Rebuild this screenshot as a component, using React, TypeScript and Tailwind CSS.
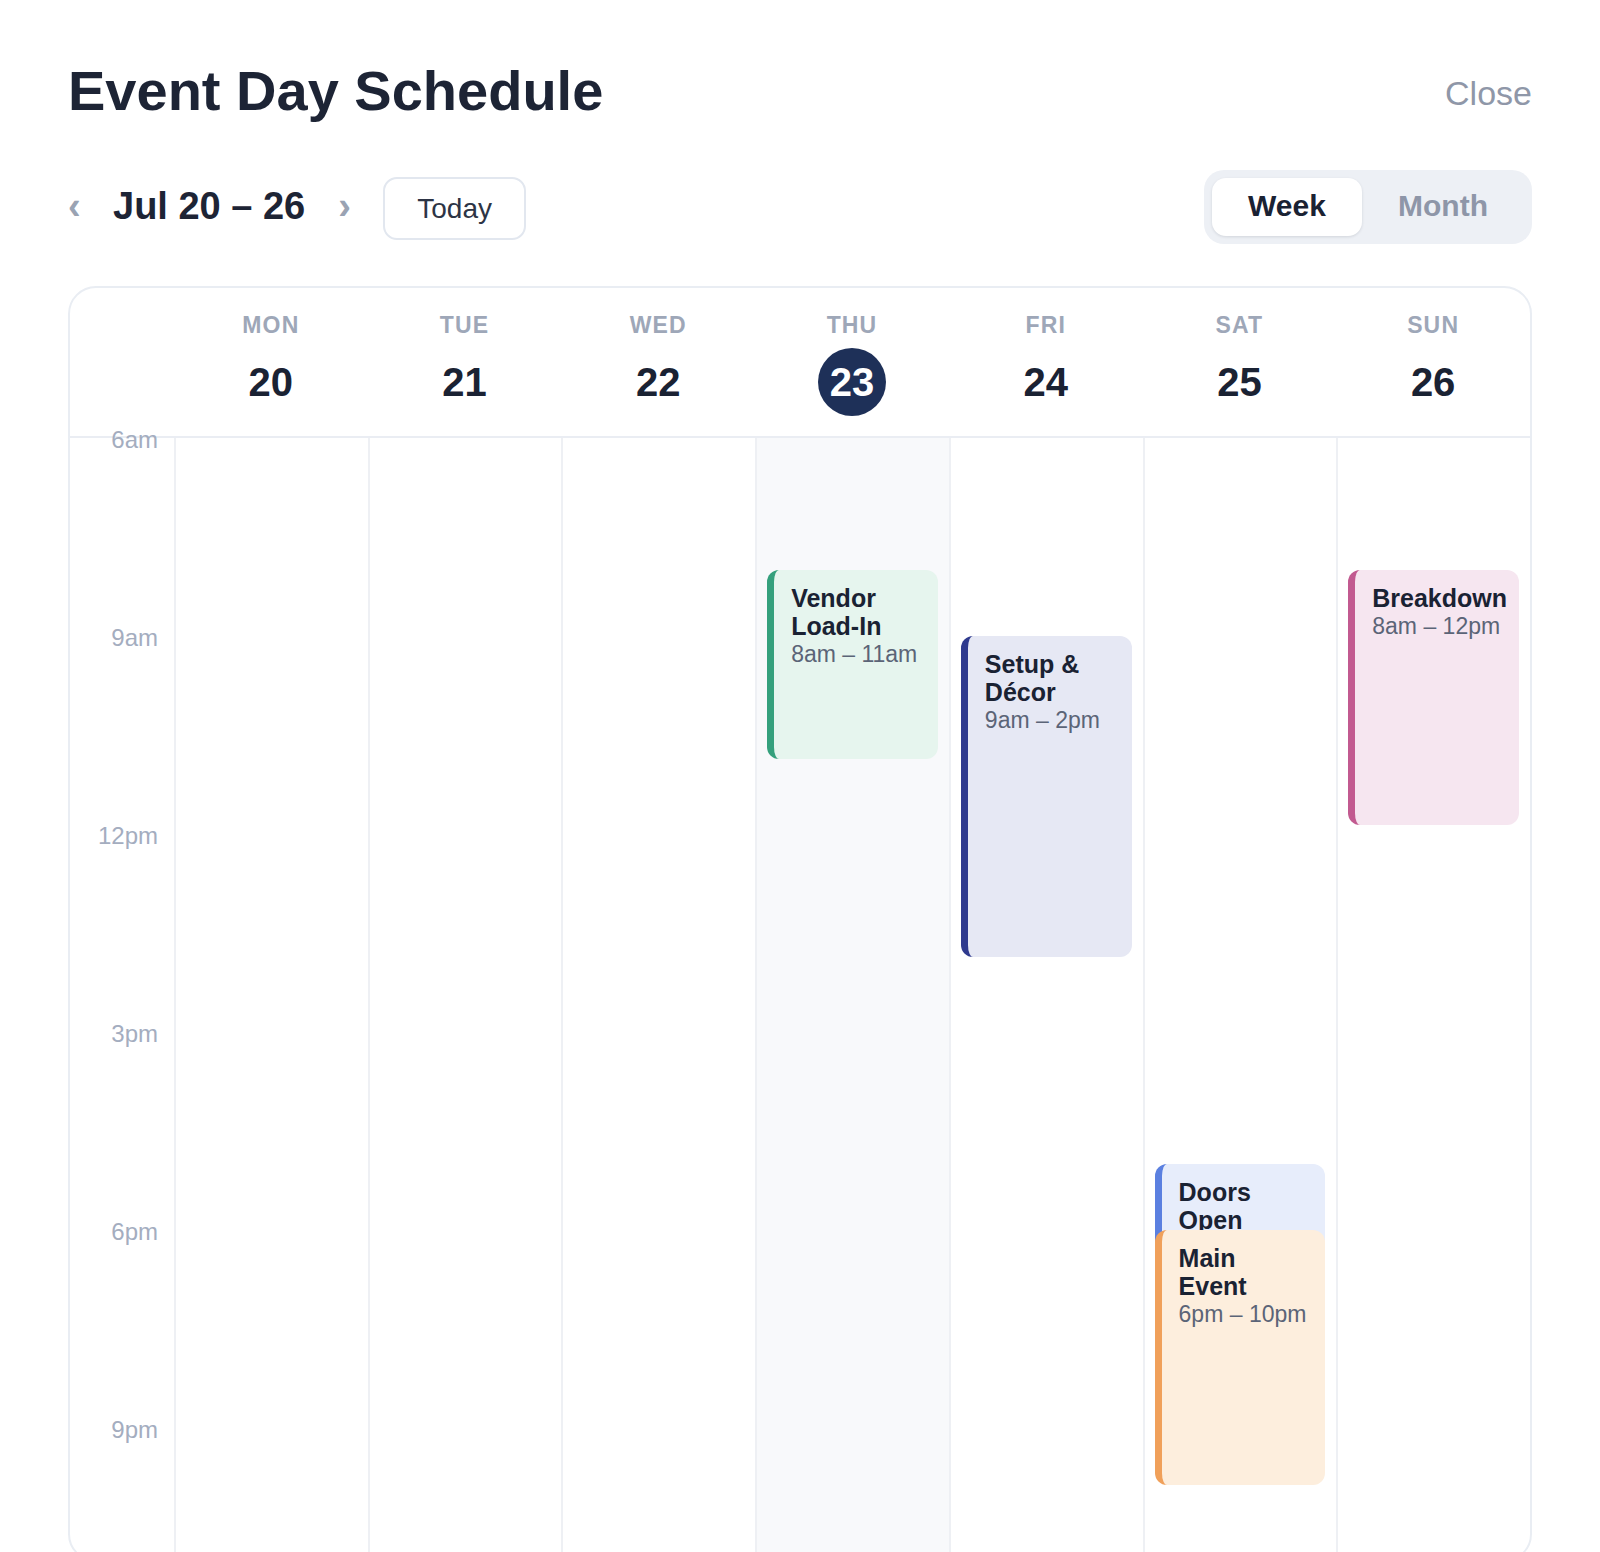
import React from 'react';

const HOUR = 66;
const START = 6;
const HOURS = 17;

const days = [
  { label: 'MON', date: 20 },
  { label: 'TUE', date: 21 },
  { label: 'WED', date: 22 },
  { label: 'THU', date: 23, today: true },
  { label: 'FRI', date: 24 },
  { label: 'SAT', date: 25 },
  { label: 'SUN', date: 26 },
];

const timeLabels = [
  { h: 6, text: '6am' },
  { h: 9, text: '9am' },
  { h: 12, text: '12pm' },
  { h: 15, text: '3pm' },
  { h: 18, text: '6pm' },
  { h: 21, text: '9pm' },
];

type CalEvent = {
  day: number;
  title: string;
  time: string;
  start: number;
  end: number;
  tone: string;
};

const events: CalEvent[] = [
  { day: 3, title: 'Vendor Load-In', time: '8am – 11am', start: 8, end: 11, tone: 'border-[#34a07c] bg-[#e6f5ee]' },
  { day: 4, title: 'Setup & Décor', time: '9am – 2pm', start: 9, end: 14, tone: 'border-[#2f3a8e] bg-[#e6e8f4]' },
  { day: 5, title: 'Doors Open', time: '5pm – 7pm', start: 17, end: 19, tone: 'border-[#5b80e0] bg-[#e7edfb]' },
  { day: 5, title: 'Main Event', time: '6pm – 10pm', start: 18, end: 22, tone: 'border-[#f0a05a] bg-[#fdeedd]' },
  { day: 6, title: 'Breakdown', time: '8am – 12pm', start: 8, end: 12, tone: 'border-[#c25a90] bg-[#f6e6f0]' },
];

const EventCard = ({ ev }: { ev: CalEvent }) => (
  <div
    className={`absolute left-[10px] right-[11px] overflow-hidden rounded-[12px] border-l-[7px] pl-[17px] pr-[18px] pt-[14px] ${ev.tone}`}
    style={{ top: (ev.start - START) * HOUR, height: (ev.end - ev.start) * HOUR - 9 }}
  >
    <div className="text-[25px] font-bold leading-[28px] text-[#1a2233]">{ev.title}</div>
    <div className="text-[23px] leading-[28px] text-[#5b6477]">{ev.time}</div>
  </div>
);

export default function App() {
  return (
    <div className="min-h-screen bg-white px-[68px] pt-[63px] pb-[68px] font-['Liberation_Sans',Arial,sans-serif]">
      {/* Title row */}
      <div className="flex items-start justify-between">
        <h1 className="text-[56px] font-bold leading-none text-[#1d2435]">Event Day Schedule</h1>
        <button className="mt-[13px] text-[34px] leading-none text-[#8f97a8]">Close</button>
      </div>

      {/* Week navigation + view toggle */}
      <div className="mt-[51px] flex h-[74px] items-center justify-between">
        <div className="flex items-center gap-[33px]">
          <button className="-mt-[3px] w-[12px] text-center text-[38px] font-bold leading-none text-[#9aa3b3]">‹</button>
          <span className="-mt-[3px] text-[38px] font-bold leading-none text-[#1d2435]">Jul 20 – 26</span>
          <button className="-mt-[3px] w-[12px] text-center text-[38px] font-bold leading-none text-[#9aa3b3]">›</button>
          <button className="mt-[3px] h-[63px] rounded-[14px] border-2 border-[#e2e7ef] px-[32px] text-[28px] text-[#2d3445]">
            Today
          </button>
        </div>
        <div className="flex items-center rounded-[20px] bg-[#edf0f5] p-[8px]">
          <button className="h-[58px] w-[150px] rounded-[14px] bg-white pb-[3px] text-[30px] font-bold text-[#1a2233] shadow-[0_1px_3px_rgba(15,23,42,0.12)]">
            Week
          </button>
          <button className="h-[58px] w-[162px] pb-[3px] text-[30px] font-bold text-[#8e96a8]">Month</button>
        </div>
      </div>

      {/* Calendar card */}
      <div className="mt-[42px] overflow-hidden rounded-[28px] border-2 border-[#e9edf3] bg-white">
        <div className="grid grid-cols-[104px_repeat(7,minmax(0,1fr))] border-b-2 border-[#eaedf3]">
          <div />
          {days.map((d) => (
            <div key={d.label} className="flex flex-col items-center pt-[23px] pb-[20px]">
              <div className="text-[23px] font-bold leading-[28px] tracking-wider text-[#9ea7b8]">{d.label}</div>
              <div
                className={`mt-[9px] flex h-[68px] w-[68px] items-center justify-center rounded-full text-[40px] font-bold leading-none ${
                  d.today ? 'bg-[#1e3058] text-white' : 'text-[#1a2233]'
                }`}
              >
                {d.date}
              </div>
            </div>
          ))}
        </div>

        <div className="grid grid-cols-[104px_repeat(7,minmax(0,1fr))]" style={{ height: HOURS * HOUR }}>
          <div className="relative">
            {timeLabels.map((t) => (
              <div
                key={t.text}
                className="absolute right-[16px] text-right text-[24px] leading-[28px] text-[#a4adbf]"
                style={{ top: (t.h - START) * HOUR - 12 }}
              >
                {t.text}
              </div>
            ))}
          </div>
          {days.map((d, i) => (
            <div
              key={d.label}
              className={`relative border-l-2 border-[#eef0f4] ${d.today ? 'bg-[#f8f9fb]' : ''}`}
            >
              {events
                .filter((ev) => ev.day === i)
                .map((ev) => (
                  <EventCard key={ev.title} ev={ev} />
                ))}
            </div>
          ))}
        </div>
      </div>
    </div>
  );
}
